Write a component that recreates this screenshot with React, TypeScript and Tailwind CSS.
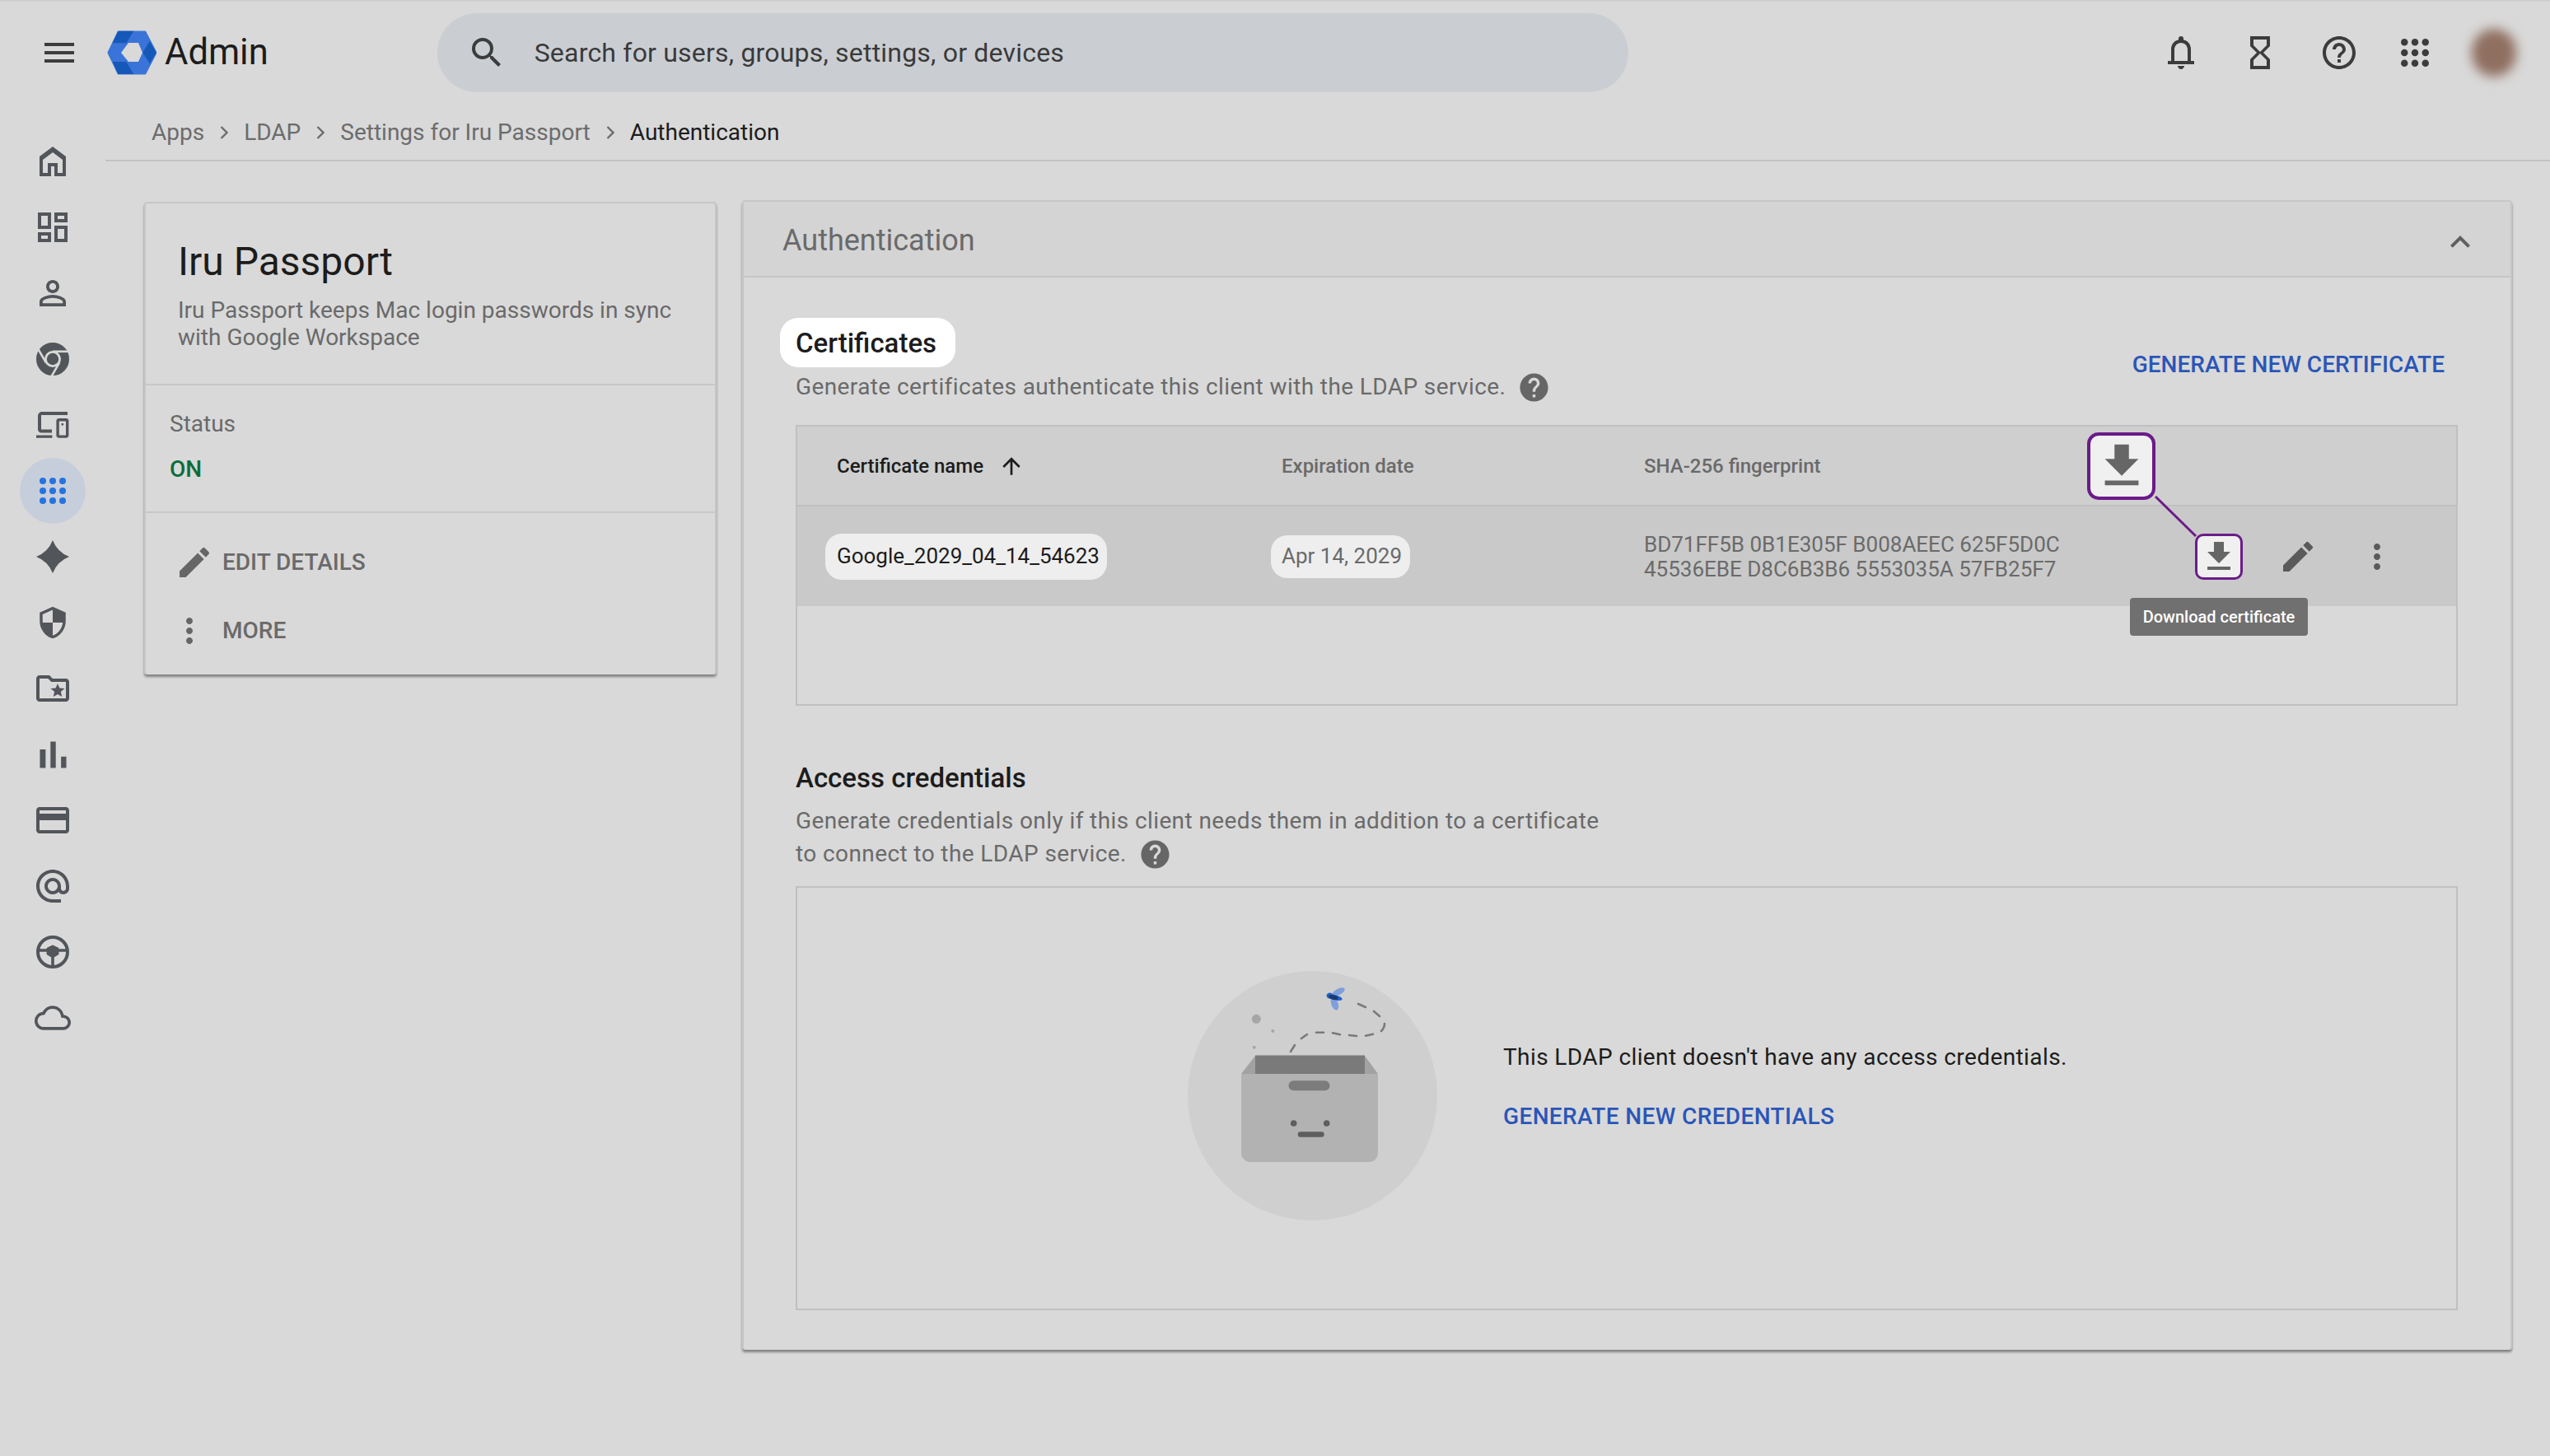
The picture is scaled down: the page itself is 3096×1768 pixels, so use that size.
import React from "react";

const Icon = ({ d, className }: { d: string; className?: string }) => (
  <svg viewBox="0 0 24 24" className={className} fill="currentColor">
    <path d={d} fillRule="evenodd" />
  </svg>
);

const paths = {
  menu: "M3 18h18v-2H3v2zm0-5h18v-2H3v2zm0-7v2h18V6H3z",
  search:
    "M15.5 14h-.79l-.28-.27A6.471 6.471 0 0 0 16 9.5 6.5 6.5 0 1 0 9.5 16c1.61 0 3.09-.59 4.23-1.57l.27.28v.79l5 4.99L20.49 19l-4.99-5zm-6 0C7.01 14 5 11.99 5 9.5S7.01 5 9.5 5 14 7.01 14 9.5 11.99 14 9.5 14z",
  bell: "M4 19v-2h2v-7c0-2.77 1.66-5.2 4.5-5.82V3.5a1.5 1.5 0 0 1 3 0v.68C16.34 4.8 18 7.23 18 10v7h2v2H4zm4-2h8v-7c0-2.2-1.8-4-4-4s-4 1.8-4 4v7zm4 5c-1.1 0-2-.9-2-2h4c0 1.1-.9 2-2 2z",
  hourglass:
    "M6 2v6h.01L6 8.01 10 12l-4 4 .01.01H6V22h12v-5.99h-.01L18 16l-4-4 4-3.99-.01-.01H18V2H6zm10 14.5V20H8v-3.5l4-4 4 4zm-4-5l-4-4V4h8v3.5l-4 4z",
  helpOutline:
    "M11 18h2v-2h-2v2zm1-16C6.48 2 2 6.48 2 12s4.48 10 10 10 10-4.48 10-10S17.52 2 12 2zm0 18c-4.41 0-8-3.59-8-8s3.59-8 8-8 8 3.59 8 8-3.59 8-8 8zm0-14c-2.21 0-4 1.79-4 4h2c0-1.1.9-2 2-2s2 .9 2 2c0 2-3 1.75-3 5h2c0-2.25 3-2.5 3-5 0-2.21-1.79-4-4-4z",
  help: "M12 2C6.48 2 2 6.48 2 12s4.48 10 10 10 10-4.48 10-10S17.52 2 12 2zm1 17h-2v-2h2v2zm2.07-7.75l-.9.92C13.45 12.9 13 13.5 13 15h-2v-.5c0-1.1.45-2.1 1.17-2.83l1.24-1.26c.37-.36.59-.86.59-1.41 0-1.1-.9-2-2-2s-2 .9-2 2H8c0-2.21 1.79-4 4-4s4 1.79 4 4c0 .88-.36 1.68-.93 2.25z",
  home: "M12 3L4 9v12h16V9l-8-6zm6 16h-3v-6H9v6H6v-8l6-4.5 6 4.5v8zM11 15v6h2v-6z",
  dashboard:
    "M19 5v2h-4V5h4M9 5v6H5V5h4m10 8v6h-4v-6h4M9 17v2H5v-2h4M21 3h-8v6h8V3zM11 3H3v10h8V3zm10 8h-8v10h8V11zm-10 4H3v6h8v-6z",
  person:
    "M12 5.9c1.16 0 2.1.94 2.1 2.1s-.94 2.1-2.1 2.1S9.9 9.16 9.9 8s.94-2.1 2.1-2.1m0 9c2.97 0 6.1 1.46 6.1 2.1v1.1H5.9V17c0-.64 3.13-2.1 6.1-2.1M12 4C9.79 4 8 5.79 8 8s1.79 4 4 4 4-1.79 4-4-1.79-4-4-4zm0 9c-2.67 0-8 1.34-8 4v3h16v-3c0-2.66-5.33-4-8-4z",
  devices:
    "M21 4H5.5A2.5 2.5 0 0 0 3 6.5v8.300c0 1.100.9 2 2 2h6.500v-2H5V6h16zM2 18.200h9.700v1.700H2zM15.700 8h4.500c.8 0 1.500.7 1.500 1.500v8.900c0 .8-.7 1.500-1.500 1.500h-4.500c-.8 0-1.500-.7-1.500-1.500V9.500c0-.8.7-1.500 1.500-1.500zm.2 1.700v8.500h4.100V9.700zM17.300 11h1.200v1.200h-1.200z",
  spark: "M12 2Q14.800 9.200 22 12 14.800 14.800 12 22 9.200 14.800 2 12 9.200 9.200 12 2z",
  shield:
    "M12 1L3 5v6c0 5.55 3.84 10.74 9 12 5.16-1.26 9-6.45 9-12V5l-9-4zm0 10.99h7c-.53 4.12-3.28 7.79-7 8.94V12H5V6.3l7-3.11v8.8z",
  folder:
    "M20 6h-8l-2-2H4c-1.1 0-1.99.9-1.99 2L2 18c0 1.1.9 2 2 2h16c1.1 0 2-.9 2-2V8c0-1.1-.9-2-2-2zm0 12H4V6h5.17l2 2H20v10zm-6.92-3.96L12.39 17 15 15.47 17.61 17l-.69-2.96 2.3-1.99-3.03-.26L15 9l-1.19 2.79-3.03.26z",
  bars: "M5 9.2h3V19H5zM10.6 5h2.8v14h-2.8zm5.6 8H19v6h-2.8z",
  card: "M20 4H4c-1.11 0-1.99.89-1.99 2L2 18c0 1.11.89 2 2 2h16c1.11 0 2-.89 2-2V6c0-1.11-.89-2-2-2zm0 14H4v-6h16v6zm0-10H4V6h16v2z",
  at: "M12 2C6.48 2 2 6.48 2 12s4.48 10 10 10h5v-2h-5c-4.34 0-8-3.66-8-8s3.66-8 8-8 8 3.66 8 8v1.43c0 .79-.71 1.57-1.5 1.57s-1.5-.78-1.5-1.57V12c0-2.76-2.24-5-5-5s-5 2.24-5 5 2.24 5 5 5c1.38 0 2.64-.56 3.54-1.47.65.89 1.77 1.47 2.96 1.47 1.97 0 3.5-1.6 3.5-3.57V12c0-5.52-4.48-10-10-10zm0 13c-1.66 0-3-1.34-3-3s1.34-3 3-3 3 1.34 3 3-1.34 3-3 3z",
  cloud:
    "M19.35 10.04A7.49 7.49 0 0 0 12 4C9.11 4 6.6 5.64 5.35 8.04A5.994 5.994 0 0 0 0 14c0 3.31 2.69 6 6 6h13c2.76 0 5-2.24 5-5 0-2.64-2.05-4.78-4.65-4.96zM19 18H6c-2.21 0-4-1.79-4-4 0-2.05 1.53-3.76 3.56-3.97l1.07-.11.5-.95A5.469 5.469 0 0 1 12 6c2.62 0 4.88 1.86 5.39 4.43l.3 1.5 1.53.11A2.98 2.98 0 0 1 22 15c0 1.65-1.35 3-3 3z",
  edit: "M3 17.25V21h3.75L17.81 9.94l-3.75-3.75L3 17.25zM20.71 7.04a.996.996 0 0 0 0-1.41l-2.34-2.34a.996.996 0 0 0-1.41 0l-1.83 1.83 3.75 3.75 1.83-1.83z",
  more: "M12 8c1.1 0 2-.9 2-2s-.9-2-2-2-2 .9-2 2 .9 2 2 2zm0 2c-1.1 0-2 .9-2 2s.9 2 2 2 2-.9 2-2-.9-2-2-2zm0 6c-1.1 0-2 .9-2 2s.9 2 2 2 2-.9 2-2-.9-2-2-2z",
  download: "M19 9h-4V3H9v6H5l7 7 7-7zM5 18v2h14v-2H5z",
  arrowUp: "M4 12l1.41 1.41L11 7.83V20h2V7.83l5.58 5.59L20 12l-8-8-8 8z",
  chevronUp: "M12 8l-6 6 1.41 1.41L12 10.83l4.59 4.58L18 14z",
};

const AppsDots = ({ className }: { className?: string }) => (
  <svg viewBox="0 0 32 32" className={className} fill="currentColor">
    {[4, 16, 28].map((y) =>
      [4, 16, 28].map((x) => <circle key={`${x}-${y}`} cx={x} cy={y} r={4} />)
    )}
  </svg>
);

const ChromeIcon = () => (
  <svg viewBox="0 0 24 24" className="h-[48px] w-[48px]" fill="none">
    <circle cx="12" cy="12" r="7.5" stroke="currentColor" strokeWidth="5" />
    <circle cx="12" cy="12" r="3.6" fill="currentColor" />
    <g stroke="#d9d9d9" strokeWidth="1.3">
      <path d="M12 7.4H23" />
      <path d="M12 7.4H23" transform="rotate(120 12 12)" />
      <path d="M12 7.4H23" transform="rotate(240 12 12)" />
    </g>
  </svg>
);

const WheelIcon = () => (
  <svg viewBox="0 0 24 24" className="h-[48px] w-[48px]" fill="none">
    <circle cx="12" cy="12" r="9" stroke="currentColor" strokeWidth="2" />
    <path stroke="currentColor" strokeWidth="1.8" d="M3 11h18M12 14v7" />
    <polygon points="12,7.800 15.700,9.500 15.700,13.500 12,15.700 8.300,13.500 8.300,9.500" fill="currentColor" />
  </svg>
);

const LogoMark = () => (
  <svg viewBox="0 0 60 54" className="h-[54px] w-[60px] shrink-0">
    <polygon
      points="2,27 14,2 46,2 59,27 46,52 14,52"
      fill="#3a74d8"
      stroke="#3a74d8"
      strokeWidth="3"
      strokeLinejoin="round"
    />
    <polygon points="13.3,.7 32.3,.7 23.3,15.3 6.7,15.3" fill="#1658b8" />
    <polygon points="6.7,38 23.3,38 32.3,53 13.3,53" fill="#1658b8" />
    <polygon points="51.7,13 59.7,26.7 51.7,40.3 43.3,26.7" fill="#1658b8" />
    <polygon points="17,27 26,15 38,15 43,27 38,38 26,38" fill="#d9d9d9" />
  </svg>
);

const Crumb = () => (
  <svg viewBox="0 0 10 16" className="mx-[19px] h-[16px] w-[10px]" fill="none" stroke="#6c6c6c" strokeWidth="2.4">
    <path d="M1.5 1l7 7-7 7" />
  </svg>
);

const EmptyBox = () => (
  <svg viewBox="42 22 303 303" className="mb-[6px] h-[303px] w-[303px] shrink-0">
    <circle cx="193.5" cy="173.5" r="151.5" fill="#cfcfcf" />
    <circle cx="125.3" cy="80.3" r="5.5" fill="#a6a6a6" />
    <circle cx="145.3" cy="95" r="2" fill="#a6a6a6" />
    <circle cx="122.7" cy="114.7" r="2" fill="#a6a6a6" />
    <path
      d="M167 120l5-8M180 104l7-5M198 96.700h9M218 97.300l9 2M238 100l9 1M258 100.700l9-2M277 95c3-3 4-6 4-9M275 77l-7-6M258 66l-9-4"
      stroke="#7a7a7a"
      strokeWidth="2.6"
      strokeLinecap="round"
      fill="none"
    />
    <polygon points="124,125 107,147 124,147" fill="#a2a2a2" />
    <polygon points="257,125 273,147 257,147" fill="#a2a2a2" />
    <rect x="124" y="124.500" width="133" height="22.500" fill="#7a7a7a" />
    <path d="M107 147h166v96a11 11 0 0 1-11 11H118a11 11 0 0 1-11-11z" fill="#b2b2b2" />
    <rect x="164.500" y="155.300" width="50" height="12" rx="6" fill="#7c7c7c" />
    <circle cx="170.700" cy="207" r="3.800" fill="#5e5e5e" />
    <circle cx="210.700" cy="207" r="3.800" fill="#5e5e5e" />
    <rect x="175.700" y="217.300" width="32" height="6.400" rx="3.200" fill="#5e5e5e" />
    <ellipse cx="225" cy="47.500" rx="8.500" ry="3.800" transform="rotate(-28 225 47.500)" fill="#7f9fdc" />
    <ellipse cx="220.500" cy="62" rx="4.200" ry="8" transform="rotate(-20 220.500 62)" fill="#7f9fdc" />
    <ellipse cx="220" cy="54" rx="10" ry="3.200" transform="rotate(14 220 54)" fill="#1f63cc" />
    <circle cx="214.500" cy="52" r="3.600" fill="#1f63cc" />
    <ellipse cx="219" cy="54" rx="6" ry="2.800" transform="rotate(14 219 54)" fill="#1a3a70" />
  </svg>
);

const sideIcons = [
  <Icon key="home" d={paths.home} className="h-[48px] w-[48px]" />,
  <Icon key="dash" d={paths.dashboard} className="h-[48px] w-[48px]" />,
  <Icon key="person" d={paths.person} className="h-[48px] w-[48px]" />,
  <ChromeIcon key="chrome" />,
  <Icon key="devices" d={paths.devices} className="h-[48px] w-[48px]" />,
  <div key="apps" className="flex h-[80px] w-[80px] items-center justify-center rounded-full bg-[#c7cedb] text-[#2473e0]">
    <AppsDots className="h-[32px] w-[32px]" />
  </div>,
  <Icon key="spark" d={paths.spark} className="h-[48px] w-[48px]" />,
  <Icon key="shield" d={paths.shield} className="h-[42px] w-[42px]" />,
  <Icon key="folder" d={paths.folder} className="h-[48px] w-[48px]" />,
  <Icon key="bars" d={paths.bars} className="h-[55px] w-[55px] shrink-0" />,
  <Icon key="card" d={paths.card} className="h-[48px] w-[48px]" />,
  <Icon key="at" d={paths.at} className="h-[48px] w-[48px]" />,
  <WheelIcon key="wheel" />,
  <Icon key="cloud" d={paths.cloud} className="h-[44px] w-[44px]" />,
];

export default function App() {
  return (
    <div className="flex h-[1768px] w-[3096px] flex-col overflow-hidden border-t-2 border-[#cfcfcf] bg-[#d9d9d9] font-['Roboto',sans-serif] text-[#6a6a6a]">
      <header className="flex h-[124px] shrink-0 items-center pl-[48px] pr-[41px]">
        <Icon d={paths.menu} className="h-[48px] w-[48px] text-[#3c3c3c]" />
        <div className="ml-[34px]">
          <LogoMark />
        </div>
        <span className="ml-[10px] text-[43.5px] leading-none text-[#1c1c1c]">Admin</span>
        <div className="ml-[205px] flex h-[96px] w-[1446px] items-center rounded-[48px] bg-[#caced3] pl-[36px] text-[#3c3c3c]">
          <Icon d={paths.search} className="h-[48px] w-[48px]" />
          <span className="ml-[34px] text-[32px] tracking-[0.2px] text-[#3a3a3a]">
            Search for users, groups, settings, or devices
          </span>
        </div>
        <div className="ml-auto flex items-center text-[#3c3c3c]">
          <Icon d={paths.bell} className="h-[48px] w-[48px]" />
          <Icon d={paths.hourglass} className="ml-[48px] h-[48px] w-[48px]" />
          <Icon d={paths.helpOutline} className="ml-[48px] h-[48px] w-[48px]" />
          <AppsDots className="ml-[51px] h-[34px] w-[34px]" />
          <div className="ml-[52px] h-[58px] w-[54px] rounded-full bg-[#8f6f60] blur-[7px]" />
        </div>
      </header>

      <div className="flex min-h-0 flex-1">
        <aside className="flex w-[128px] shrink-0 flex-col pt-[30px] text-[#52555a]">
          {sideIcons.map((ic, i) => (
            <div key={i} className="flex h-[80px] items-center justify-center">
              {ic}
            </div>
          ))}
        </aside>

        <main className="min-w-0 flex-1">
          <nav className="flex h-[70px] items-center border-b-2 border-[#c2c2c2] pl-[56px] pt-[2px] text-[28px] text-[#6c6c6c]">
            <span>Apps</span>
            <Crumb />
            <span>LDAP</span>
            <Crumb />
            <span>Settings for Iru Passport</span>
            <Crumb />
            <span className="text-[#1c1c1c]">Authentication</span>
          </nav>

          <div className="flex items-start gap-[31px] pl-[47px] pt-[47px]">
            <section className="mt-[2px] h-[574px] w-[695px] shrink-0 rounded-[4px] border-2 border-b-0 border-[#c6c6c6] shadow-[0_3px_3px_rgba(0,0,0,0.4)]">
              <div className="h-[221px] border-b-2 border-[#c8c8c8] px-[39px] pt-[43px]">
                <h1 className="text-[48px] leading-[56px] text-[#1c1c1c]">Iru Passport</h1>
                <p className="mt-[14px] text-[28px] leading-[33px] text-[#6a6a6a]">
                  Iru Passport keeps Mac login passwords in sync
                  <br />
                  with Google Workspace
                </p>
              </div>
              <div className="h-[155px] border-b-2 border-[#c8c8c8] px-[29px] pt-[31px]">
                <div className="text-[28px] leading-[32px]">Status</div>
                <div className="mt-[23px] text-[28px] font-medium leading-[32px] text-[#0b6e3a]">ON</div>
              </div>
              <div className="pt-[18px]">
                <div className="flex h-[83px] items-center">
                  <Icon d={paths.edit} className="ml-[35px] h-[48px] w-[48px] text-[#666666]" />
                  <span className="ml-[10px] text-[28px] font-medium">EDIT DETAILS</span>
                </div>
                <div className="flex h-[84px] items-center">
                  <Icon d={paths.more} className="ml-[29px] h-[48px] w-[48px] text-[#666666]" />
                  <span className="ml-[16px] text-[28px] font-medium">MORE</span>
                </div>
              </div>
            </section>

            <section className="w-[2149px] shrink-0 rounded-[4px] border-2 border-b-0 border-[#c6c6c6] shadow-[0_3px_3px_rgba(0,0,0,0.4)]">
              <div className="flex h-[92px] items-center border-b-2 border-[#c6c6c6] bg-[#d4d4d4] pl-[47px] pr-[37px]">
                <h2 className="pt-[4px] text-[36px] text-[#6a6a6a]">Authentication</h2>
                <Icon d={paths.chevronUp} className="ml-auto mt-[8px] h-[48px] w-[48px] text-[#606060]" />
              </div>

              <div className="pb-[48px] pl-[63px] pr-[64px] pt-[49px]">
                <div className="flex items-start justify-between">
                  <div>
                    <h3 className="-ml-[19px] flex h-[60px] w-fit items-center rounded-[22px] bg-white pl-[19px] pr-[23px] pt-[2px] text-[33px] font-medium text-[#1c1c1c]">
                      Certificates
                    </h3>
                    <p className="mt-[6px] flex h-[36px] items-center text-[28px] tracking-[0.4px]">
                      Generate certificates authenticate this client with the LDAP service.
                      <Icon d={paths.help} className="ml-[14px] h-[41px] w-[41px] text-[#666666]" />
                    </p>
                  </div>
                  <button className="mr-[16px] mt-[40px] text-[28px] font-medium leading-[34px] text-[#2a56b8]">
                    GENERATE NEW CERTIFICATE
                  </button>
                </div>

                <div className="relative mt-[28px] flex h-[341px] flex-col border-2 border-[#c0c0c0]">
                  <div className="grid h-[97px] grid-cols-[588px_440px_1fr] items-center border-b-2 border-[#c0c0c0] bg-[#cfcfcf] text-[24px] font-medium">
                    <div className="flex items-center pl-[48px] text-[#1c1c1c]">
                      Certificate name
                      <Icon d={paths.arrowUp} className="ml-[18px] h-[32px] w-[32px]" />
                    </div>
                    <div>Expiration date</div>
                    <div>SHA-256 fingerprint</div>
                  </div>
                  <div className="grid h-[121px] grid-cols-[588px_440px_1fr] items-center bg-[#c9c9c9]">
                    <div className="pl-[48px]">
                      <span className="-ml-[14px] flex h-[56px] w-fit items-center rounded-[20px] bg-[#eeeeee] pl-[14px] pr-[9px] text-[26px] text-[#1c1c1c]">
                        Google_2029_04_14_54623
                      </span>
                    </div>
                    <div>
                      <span className="-ml-[13px] flex h-[52px] w-fit items-center rounded-[20px] bg-[#eeeeee] pl-[13px] pr-[10px] text-[26px]">
                        Apr 14, 2029
                      </span>
                    </div>
                    <div className="flex items-center">
                      <div className="w-[669px] text-[26px] leading-[30px]">
                        BD71FF5B 0B1E305F B008AEEC 625F5D0C
                        <br />
                        45536EBE D8C6B3B6 5553035A 57FB25F7
                      </div>
                      <div className="flex h-[56px] w-[58px] items-center justify-center rounded-[10px] border-[3px] border-[#6a1b8a] bg-[#f0f0f0] text-[#666666]">
                        <Icon d={paths.download} className="h-[48px] w-[48px] shrink-0" />
                      </div>
                      <Icon d={paths.edit} className="ml-[43px] h-[48px] w-[48px] text-[#5a5a5a]" />
                      <Icon d={paths.more} className="ml-[48px] h-[48px] w-[48px] text-[#5a5a5a]" />
                    </div>
                  </div>

                  {/* callout over the table */}
                  <svg className="pointer-events-none absolute left-[1645px] top-[84px] h-[52px] w-[56px]" viewBox="0 0 56 52" fill="none">
                    <path d="M4 1l49 48" stroke="#6a1b8a" strokeWidth="3" />
                  </svg>
                  <div className="absolute left-[1566px] top-[7px] flex h-[82px] w-[83px] items-center justify-center rounded-[14px] border-4 border-[#6a1b8a] bg-[#f0f0f0] text-[#666666]">
                    <Icon d={paths.download} className="h-[70px] w-[70px] shrink-0" />
                  </div>
                  <div className="absolute left-[1618px] top-[208px] flex h-[46px] w-[216px] items-center justify-center rounded-[4px] bg-[#707070] text-[20px] font-medium text-white">
                    Download certificate
                  </div>
                </div>

                <h3 className="mt-[68px] text-[33px] font-medium leading-[40px] text-[#1c1c1c]">Access credentials</h3>
                <p className="mt-[12px] text-[28px] leading-[40px] tracking-[0.4px]">
                  Generate credentials only if this client needs them in addition to a certificate
                </p>
                <p className="flex h-[40px] items-center text-[28px] tracking-[0.4px]">
                  to connect to the LDAP service.
                  <Icon d={paths.help} className="ml-[14px] h-[41px] w-[41px] text-[#666666]" />
                </p>

                <div className="mt-[19px] flex h-[515px] items-center border-2 border-[#c0c0c0] pl-[474px]">
                  <EmptyBox />
                  <div className="mb-[28px] ml-[80px]">
                    <div className="text-[28px] leading-[36px] tracking-[0.4px] text-[#1c1c1c]">
                      This LDAP client doesn't have any access credentials.
                    </div>
                    <button className="mt-[36px] text-[28px] font-medium leading-[36px] tracking-[0.37px] text-[#2a56b8]">
                      GENERATE NEW CREDENTIALS
                    </button>
                  </div>
                </div>
              </div>
            </section>
          </div>
        </main>
      </div>
    </div>
  );
}
